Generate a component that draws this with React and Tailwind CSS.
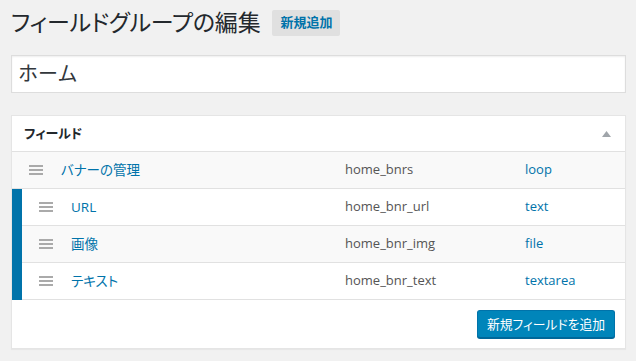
import React from 'react';

const font = "font-['Open_Sans','Noto_Sans_CJK_JP',sans-serif] [font-feature-settings:'palt']";

const fields = [
    { label: 'バナーの管理', name: 'home_bnrs', type: 'loop', child: false, alt: true },
    { label: 'URL', name: 'home_bnr_url', type: 'text', child: true, alt: false },
    { label: '画像', name: 'home_bnr_img', type: 'file', child: true, alt: true },
    { label: 'テキスト', name: 'home_bnr_text', type: 'textarea', child: true, alt: false },
];

function Handle() {
    return (
        <div className="w-[14px] flex flex-col gap-[2px] mr-[18px] shrink-0">
            <div className="h-[2px] bg-[#aaaaaa]" />
            <div className="h-[2px] bg-[#aaaaaa]" />
            <div className="h-[2px] bg-[#aaaaaa]" />
        </div>
    );
}

export default function App() {
    return (
        <div className={`min-h-[361px] bg-[#f1f1f1] px-[11px] pt-[8px] ${font}`}>
            {/* Title */}
            <div className="flex items-center h-[29px]">
                <h1 className="text-[23px] leading-none text-[#23282d] tracking-[-0.2px]">フィールドグループの編集</h1>
                <span className="ml-[12px] h-[26px] px-[8px] flex items-center rounded-[2px] bg-[#e0e0e0] text-[13px] font-bold text-[#0073aa]">新規追加</span>
            </div>

            {/* Title input */}
            <div className="mt-[18px] h-[38px] w-[615px] bg-white border border-[#dddddd] shadow-[inset_0_1px_2px_rgba(0,0,0,0.07)] flex items-center px-[6px]">
                <span className="text-[20px] text-[#32373c] [font-feature-settings:normal]">ホーム</span>
            </div>

            {/* Fields panel */}
            <div className="mt-[22px] w-[615px] bg-white border border-[#e5e5e5] shadow-[0_1px_1px_rgba(0,0,0,0.04)]">
                <div className="h-[36px] flex items-center justify-between pl-[12px] pr-[12px] border-b border-[#e1e1e1]">
                    <span className="text-[13px] font-bold text-[#23282d]">フィールド</span>
                    <svg width="9" height="6" viewBox="0 0 9 6" className="mr-[2px]">
                        <path d="M4.5 0 L9 6 L0 6 Z" fill="#a0a5aa" />
                    </svg>
                </div>

                {fields.map((f) => (
                    <div
                        key={f.name}
                        className={`h-[37px] flex items-stretch border-b border-[#e1e1e1] text-[13px] ${f.alt ? 'bg-[#f9f9f9]' : 'bg-white'}`}
                    >
                        {f.child && <div className="w-[10px] bg-[#0073aa] -mb-px" />}
                        <div className={`flex items-center pl-[17px] ${f.child ? 'w-[323px]' : 'w-[333px]'}`}>
                            <Handle />
                            <span className="text-[#0073aa] text-[13.5px]">{f.label}</span>
                        </div>
                        <div className="w-[180px] flex items-center text-[#555555]">{f.name}</div>
                        <div className="flex-1 flex items-center text-[#0073aa]">{f.type}</div>
                    </div>
                ))}

                <div className="flex justify-end p-[10px]">
                    <button className="h-[28px] px-[9px] rounded-[3px] bg-[#0085ba] border border-[#0073aa] border-b-[#006799] shadow-[0_1px_0_#006799] text-white text-[12.8px] leading-none">
                        新規フィールドを追加
                    </button>
                </div>
            </div>
        </div>
    );
}
